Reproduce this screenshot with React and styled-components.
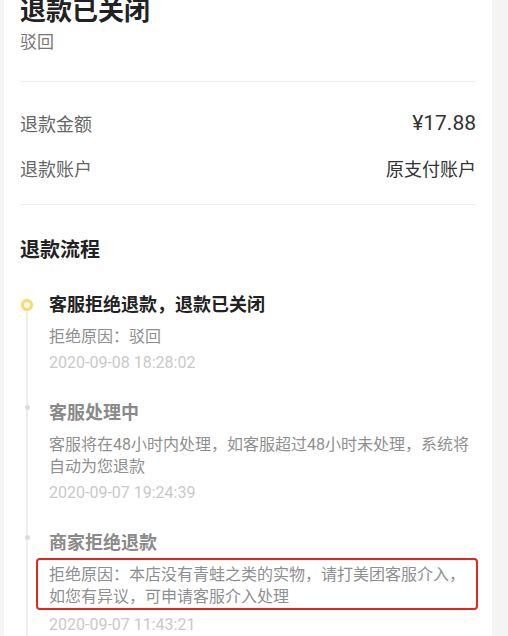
import styled, { createGlobalStyle } from "styled-components";

const GlobalStyle = createGlobalStyle`
  html, body {
    margin: 0;
    padding: 0;
    background-color: #f4f4f4;
  }
  body {
    font-family: Roboto, "Noto Sans CJK SC", sans-serif;
    overflow: hidden;
  }
`;

const Card = styled.div`
  width: 456px;
  min-height: 100vh;
  margin-left: 4px;
  padding: 0 16px;
  background-color: white;
`;

const Header = styled.div`
  padding-bottom: 27px;
  border-bottom: 1px solid #f0f0f0;
`;

const Title = styled.div`
  margin-top: -4px;
  font-size: 26px;
  line-height: 30px;
  font-weight: 700;
  color: #222;
`;

const SubTitle = styled.div`
  margin-top: 4px;
  font-size: 17px;
  line-height: 24px;
  color: #777;
`;

const Info = styled.div`
  padding: 18px 0 14px;
  border-bottom: 1px solid #f0f0f0;
`;

const InfoRow = styled.div`
  display: flex;
  justify-content: space-between;
  align-items: center;
  height: 45px;
`;

const Label = styled.span`
  font-size: 18px;
  color: #666;
`;

const Value = styled.span`
  font-size: ${(p) => (p.$big ? "21px" : "18px")};
  font-weight: 400;
  color: #333;
`;

const SectionTitle = styled.div`
  margin-top: 31px;
  font-size: 20px;
  line-height: 28px;
  font-weight: 700;
  color: #222;
`;

const Timeline = styled.div`
  margin-top: 28px;
  display: flex;
  flex-direction: column;
`;

const Item = styled.div`
  display: flex;
  gap: 15px;
`;

const Rail = styled.div`
  width: 14px;
  display: flex;
  flex-direction: column;
  align-items: center;
  flex-shrink: 0;
`;

const RailLine = styled.div`
  width: 2px;
  background-color: ${(p) => (p.$hidden ? "transparent" : "#eeeeee")};
  height: ${(p) => (p.$grow ? "auto" : `${p.$h}px`)};
  flex: ${(p) => (p.$grow ? 1 : "none")};
`;

const Dot = styled.div`
  box-sizing: border-box;
  border-radius: 50%;
  flex-shrink: 0;
  ${(p) =>
    p.$active
      ? `
    width: 12px;
    height: 12px;
    border: 3px solid #f5dc72;
    background-color: #fffbe8;
    box-shadow: 0 0 2px #f8e9a8;
  `
      : `
    width: 5px;
    height: 5px;
    background-color: #dcdcdc;
  `}
`;

const Body = styled.div`
  flex: 1;
  padding-bottom: 26px;
`;

const StepTitle = styled.div`
  font-size: 18px;
  line-height: 26px;
  font-weight: 700;
  color: ${(p) => (p.$active ? "#222" : "#8a8a8a")};
`;

const Desc = styled.div`
  font-size: 16px;
  line-height: 22px;
  color: #8f8f8f;
  margin-top: 8px;
  ${(p) =>
    p.$marked &&
    `
    margin: 2px -2px 0 -13px;
    padding: 4px 2px 0 11px;
    border: 2px solid #e3261e;
    border-radius: 4px;
  `}
`;

const Time = styled.div`
  margin-top: 4px;
  font-size: 16px;
  line-height: 22px;
  color: #c9c9c9;
`;

const steps = [
  {
    title: "客服拒绝退款，退款已关闭",
    desc: "拒绝原因：驳回",
    time: "2020-09-08 18:28:02",
    active: true,
  },
  {
    title: "客服处理中",
    desc: "客服将在48小时内处理，如客服超过48小时未处理，系统将自动为您退款",
    time: "2020-09-07 19:24:39",
  },
  {
    title: "商家拒绝退款",
    desc: "拒绝原因：本店没有青蛙之类的实物，请打美团客服介入，如您有异议，可申请客服介入处理",
    time: "2020-09-07 11:43:21",
    marked: true,
  },
];

export default function App() {
  return (
    <>
      <GlobalStyle />
      <Card>
        <Header>
          <Title>退款已关闭</Title>
          <SubTitle>驳回</SubTitle>
        </Header>
        <Info>
          <InfoRow>
            <Label>退款金额</Label>
            <Value $big>¥17.88</Value>
          </InfoRow>
          <InfoRow>
            <Label>退款账户</Label>
            <Value>原支付账户</Value>
          </InfoRow>
        </Info>
        <SectionTitle>退款流程</SectionTitle>
        <Timeline>
          {steps.map((s, i) => (
            <Item key={i}>
              <Rail>
                <RailLine $h={s.active ? 7 : 5} $hidden={i === 0} />
                <Dot $active={s.active} />
                <RailLine $grow />
              </Rail>
              <Body>
                <StepTitle $active={s.active}>{s.title}</StepTitle>
                <Desc $marked={s.marked}>{s.desc}</Desc>
                <Time>{s.time}</Time>
              </Body>
            </Item>
          ))}
        </Timeline>
      </Card>
    </>
  );
}
